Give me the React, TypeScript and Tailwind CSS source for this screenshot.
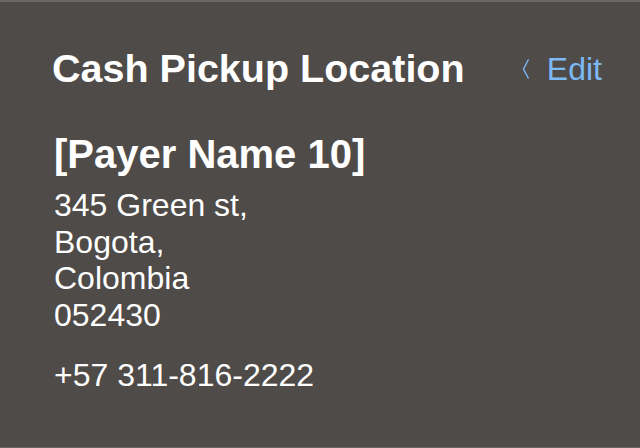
export default function App() {
  return (
    <div className="w-[640px] h-[448px] bg-[#4f4b48] border-t-2 border-t-[#6a6764] border-b border-b-[#6a6764] font-['Liberation_Sans',Arial,sans-serif] text-white overflow-hidden">
      <div className="pl-[52px] pr-[38px] pt-[44px]">
        <div className="flex items-center justify-between h-[46px]">
          <h1 className="text-[39.5px] font-bold leading-none">Cash Pickup Location</h1>
          <button className="flex items-center gap-[17px] text-[#7cb9f5] text-[32px] leading-none">
            <svg width="8" height="22" viewBox="0 0 8 22" fill="none" stroke="#7cb9f5" strokeWidth="1.4">
              <path d="M6.5 1.5 L1.5 11 L6.5 20.5" />
            </svg>
            <span>Edit</span>
          </button>
        </div>
        <div className="mt-[40px] pl-[2px]">
          <div className="text-[40px] font-bold leading-[44px]">[Payer Name 10]</div>
          <div className="text-[32px] leading-[36.5px] mt-[11px]">
            <div>345 Green st,</div>
            <div>Bogota,</div>
            <div>Colombia</div>
            <div>052430</div>
          </div>
          <div className="text-[32px] leading-[36.5px] mt-[24px]">+57 311-816-2222</div>
        </div>
      </div>
    </div>
  )
}
